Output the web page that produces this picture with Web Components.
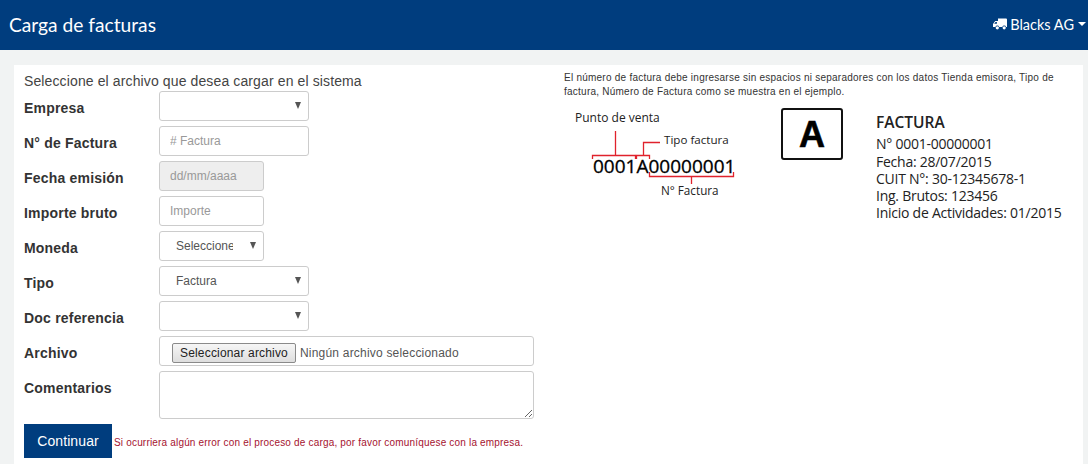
<!DOCTYPE html>
<html lang="es">
<head>
<meta charset="utf-8">
<title>Carga de facturas</title>
<style>
  html, body { margin: 0; height: 100%; overflow: hidden; }
  body { background: #f1f3f3; font-family: "Liberation Sans", Arial, sans-serif; color: #333; }
</style>
</head>
<body>
<app-page>
  <app-header slot="header" title="Carga de facturas" user="Blacks AG"></app-header>
  <upload-form slot="left">
    <form-row label="Empresa"><field-select width="150"></field-select></form-row>
    <form-row label="N° de Factura"><field-input width="150" placeholder="# Factura"></field-input></form-row>
    <form-row label="Fecha emisión"><field-input width="105" placeholder="dd/mm/aaaa" disabled></field-input></form-row>
    <form-row label="Importe bruto"><field-input width="105" placeholder="Importe"></field-input></form-row>
    <form-row label="Moneda"><field-select width="105" value="Seleccione"></field-select></form-row>
    <form-row label="Tipo"><field-select width="150" value="Factura"></field-select></form-row>
    <form-row label="Doc referencia"><field-select width="150"></field-select></form-row>
    <form-row label="Archivo"><field-file></field-file></form-row>
    <form-row label="Comentarios"><field-area></field-area></form-row>
  </upload-form>
  <invoice-help slot="right"></invoice-help>
</app-page>

<script>
const pageCss = `
  <style>
    :host { display: flex; flex-direction: column; height: 464px; }
    .card {
      flex: 1;
      display: flex;
      margin: 15px 5px 0 14px;
      background: #fff;
    }
    .left { width: 550px; padding: 7px 0 0 10px; box-sizing: border-box; }
    .right { flex: 1; }
  </style>
`;

class AppPage extends HTMLElement {
  constructor() {
    super();
    this.shadow = this.attachShadow({ mode: 'open' });
  };

  connectedCallback() {
    this.shadow.innerHTML = `
    ${pageCss}
    <slot name="header"></slot>
    <div class="card">
      <div class="left"><slot name="left"></slot></div>
      <div class="right"><slot name="right"></slot></div>
    </div>
    `;
  };
}

class AppHeader extends HTMLElement {
  constructor() {
    super();
    this.shadow = this.attachShadow({ mode: 'open' });
  };

  connectedCallback() {
    this.shadow.innerHTML = `
    <style>
      :host {
        display: flex;
        align-items: center;
        justify-content: space-between;
        height: 50px;
        padding: 0 2px 2px 9px;
        box-sizing: border-box;
        background: #003d7e;
        color: #fff;
      }
      .title { font: 19.2px Lato, sans-serif; }
      .user { display: flex; align-items: center; font: 14.5px Lato, sans-serif; }
      .truck { margin-right: 3px; }
      .caret { margin-left: 4px; }
    </style>
    <div class="title">${this.getAttribute('title')}</div>
    <div class="user">
      <svg class="truck" width="14" height="12" viewBox="0 0 14 12" aria-hidden="true">
        <path fill="#fff" d="M5 0.5h8a1 1 0 0 1 1 1v7.5h-.9a2 2 0 0 0-3.8 0H6.2a2 2 0 0 0-3.8 0H0V6l2.2-3H5V1a.5.5 0 0 1 0-.5zM1.2 5.8h2.7V3.9H2.6z"/>
        <circle fill="#fff" cx="4.3" cy="9.8" r="1.6"/>
        <circle fill="#fff" cx="11.2" cy="9.8" r="1.6"/>
      </svg>
      <span>${this.getAttribute('user')}</span>
      <svg class="caret" width="8" height="4" viewBox="0 0 8 4" aria-hidden="true"><path fill="#fff" d="M0 0h8L4 4z"/></svg>
    </div>
    `;
  };
}

class UploadForm extends HTMLElement {
  constructor() {
    super();
    this.shadow = this.attachShadow({ mode: 'open' });
  };

  connectedCallback() {
    this.shadow.innerHTML = `
    <style>
      :host { display: block; font: 14px "Liberation Sans", Arial, sans-serif; }
      .intro { height: 19px; line-height: 19px; color: #444; letter-spacing: .12px; }
      .bottom { display: flex; align-items: center; gap: 2px; margin-top: 5px; }
      button {
        width: 88px;
        height: 34px;
        padding: 0;
        border: 0;
        background: #003d7e;
        color: #fff;
        font: 14px "Liberation Sans", Arial, sans-serif;
        letter-spacing: .1px;
      }
      .error { font-size: 10px; letter-spacing: .18px; color: #a5132f; position: relative; top: 1px; }
    </style>
    <div class="intro">Seleccione el archivo que desea cargar en el sistema</div>
    <slot></slot>
    <div class="bottom">
      <button type="button">Continuar</button>
      <span class="error">Si ocurriera algún error con el proceso de carga, por favor comuníquese con la empresa.</span>
    </div>
    `;
  };
}

class FormRow extends HTMLElement {
  constructor() {
    super();
    this.shadow = this.attachShadow({ mode: 'open' });
  };

  connectedCallback() {
    this.shadow.innerHTML = `
    <style>
      :host { display: flex; margin-bottom: 5px; }
      label {
        width: 135px;
        flex: none;
        padding-top: 9px;
        line-height: 16px;
        font-weight: bold;
        letter-spacing: .2px;
        color: #333;
      }
    </style>
    <label>${this.getAttribute('label')}</label>
    <slot></slot>
    `;
  };
}

const fieldBox = `
  border: 1px solid #ccc;
  border-radius: 3px;
  background: #fff;
  box-sizing: border-box;
  font: 12px "Liberation Sans", Arial, sans-serif;
  color: #555;
`;

class FieldSelect extends HTMLElement {
  constructor() {
    super();
    this.shadow = this.attachShadow({ mode: 'open' });
  };

  connectedCallback() {
    const width = this.getAttribute('width');
    const value = this.getAttribute('value') || '';
    this.shadow.innerHTML = `
    <style>
      :host { display: block; }
      .box {
        ${fieldBox}
        width: ${width}px;
        height: 30px;
        display: flex;
        align-items: center;
        padding: 0 7px 0 16px;
      }
      .value { flex: 1; overflow: hidden; white-space: nowrap; }
      svg { flex: none; margin: 0 0 2px 17px; }
    </style>
    <div class="box">
      <span class="value">${value}</span>
      <svg width="6" height="7" viewBox="0 0 6 7" aria-hidden="true"><path fill="#555" d="M0 0h6L3 7z"/></svg>
    </div>
    `;
  };
}

class FieldInput extends HTMLElement {
  constructor() {
    super();
    this.shadow = this.attachShadow({ mode: 'open' });
  };

  connectedCallback() {
    const width = this.getAttribute('width');
    const disabled = this.hasAttribute('disabled') ? 'disabled' : '';
    this.shadow.innerHTML = `
    <style>
      :host { display: block; }
      input {
        ${fieldBox}
        display: block;
        width: ${width}px;
        height: 30px;
        margin: 0;
        padding: 0 10px;
        outline: 0;
      }
      input::placeholder { color: #999; opacity: 1; }
      input:disabled { background: #eee; }
    </style>
    <input type="text" placeholder="${this.getAttribute('placeholder')}" ${disabled}>
    `;
  };
}

class FieldFile extends HTMLElement {
  constructor() {
    super();
    this.shadow = this.attachShadow({ mode: 'open' });
  };

  connectedCallback() {
    this.shadow.innerHTML = `
    <style>
      :host { display: block; }
      .box {
        ${fieldBox}
        width: 375px;
        height: 30px;
        display: flex;
        align-items: center;
        gap: 4px;
        padding: 3px 0 0 12px;
        letter-spacing: .2px;
      }
      button {
        width: 124px;
        height: 20px;
        padding: 0;
        border: 1px solid #8a8a8a;
        border-radius: 2px;
        background: linear-gradient(#f6f6f6, #dedede);
        color: #222;
        font: 12px "Liberation Sans", Arial, sans-serif;
        letter-spacing: .17px;
      }
    </style>
    <div class="box">
      <button type="button">Seleccionar archivo</button>
      <span>Ningún archivo seleccionado</span>
    </div>
    `;
  };
}

class FieldArea extends HTMLElement {
  constructor() {
    super();
    this.shadow = this.attachShadow({ mode: 'open' });
  };

  connectedCallback() {
    this.shadow.innerHTML = `
    <style>
      :host { display: block; }
      textarea {
        ${fieldBox}
        display: block;
        width: 375px;
        height: 48px;
        margin: 0;
        outline: 0;
      }
    </style>
    <textarea></textarea>
    `;
  };
}

class InvoiceHelp extends HTMLElement {
  constructor() {
    super();
    this.shadow = this.attachShadow({ mode: 'open' });
  };

  connectedCallback() {
    // svg origin is at page (564, 100)
    this.shadow.innerHTML = `
    <style>
      :host { display: block; padding-top: 6px; }
      p {
        width: 510px;
        height: 29px;
        margin: 0;
        font: 10px/14px "Liberation Sans", Arial, sans-serif;
        letter-spacing: .24px;
        color: #333;
      }
      svg { display: block; }
      text { font-family: "Open Sans", sans-serif; fill: #222; }
      .red { fill: none; stroke: #e0222c; stroke-width: 1.3; }
      .num { stroke: #000; stroke-width: .3px; fill: #000; }
      .big { font-family: "Liberation Sans", sans-serif; fill: #000; stroke: #000; stroke-width: .6px; }
      .info { letter-spacing: -.25px; }
    </style>
    <p>El número de factura debe ingresarse sin espacios ni separadores con los datos Tienda emisora, Tipo de factura, Número de Factura como se muestra en el ejemplo.</p>
    <svg width="510" height="130" viewBox="564 100 510 130">
      <text x="575" y="122" font-size="12">Punto de venta</text>
      <path class="red" d="M615.5 131V155M592.5 159V155.5H635.5V159"/>
      <path class="red" d="M636.5 159V155.5H649.5V159M643.5 155V142.5H660"/>
      <text x="664" y="144" font-size="11.6">Tipo factura</text>
      <text class="num" x="593" y="173" font-size="19">0001A00000001</text>
      <path class="red" d="M649.5 172V176.5H733.5V172M691.5 176V184"/>
      <text x="661" y="195" font-size="11.7">N° Factura</text>
      <rect x="782" y="109" width="60" height="50" rx="2" fill="#fff" stroke="#111" stroke-width="2"/>
      <text class="big" x="812" y="147" font-size="36" font-weight="bold" text-anchor="middle">A</text>
      <text x="876" y="128" font-size="15.5" font-weight="600">FACTURA</text>
      <text class="info" x="876" y="149" font-size="14">N° 0001-00000001</text>
      <text class="info" x="876" y="167" font-size="14">Fecha: 28/07/2015</text>
      <text class="info" x="876" y="184" font-size="14">CUIT N°: 30-12345678-1</text>
      <text class="info" x="876" y="201" font-size="14">Ing. Brutos: 123456</text>
      <text class="info" x="876" y="218" font-size="14">Inicio de Actividades: 01/2015</text>
    </svg>
    `;
  };
}

customElements.define('app-page', AppPage);
customElements.define('app-header', AppHeader);
customElements.define('upload-form', UploadForm);
customElements.define('form-row', FormRow);
customElements.define('field-select', FieldSelect);
customElements.define('field-input', FieldInput);
customElements.define('field-file', FieldFile);
customElements.define('field-area', FieldArea);
customElements.define('invoice-help', InvoiceHelp);
</script>
</body>
</html>
